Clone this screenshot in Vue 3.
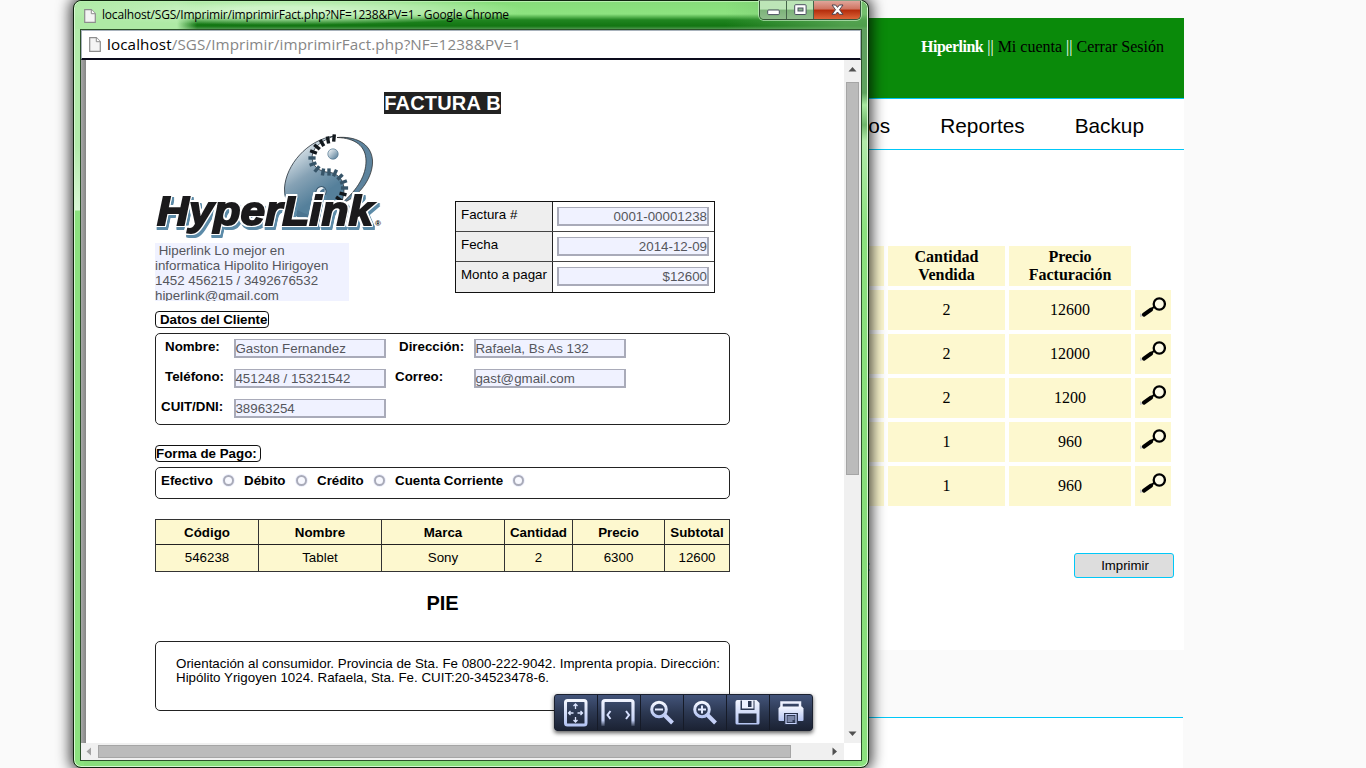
<script setup>
const rows = [
  { qty: '2', price: '12600' },
  { qty: '2', price: '12000' },
  { qty: '2', price: '1200' },
  { qty: '1', price: '960' },
  { qty: '1', price: '960' },
]
const meta = [
  { label: 'Factura #', value: '0001-00001238' },
  { label: 'Fecha', value: '2014-12-09' },
  { label: 'Monto a pagar', value: '$12600' },
]
const heads = ['Código', 'Nombre', 'Marca', 'Cantidad', 'Precio', 'Subtotal']
const item = ['546238', 'Tablet', 'Sony', '2', '6300', '12600']
// Teeth of the gear edge that runs along the S curve of the emblem
const teeth = [
  [179, 6, 95], [173, 8, 80], [167, 11, 60], [162, 15, 40], [158.5, 20, 20], [157, 26, 0], [158, 32, -20],
  [162, 37, -50], [168, 40, -80], [174, 40, -90], [180, 41, -65], [185, 45, -45], [188.500, 50, -20], [189.500, 56, 0],
  [188, 62, 15], [184, 67, 35],
]
</script>

<template>
  <div class="desktop">
    <div class="page">
      <header class="top"><b>Hiperlink</b> <i>||</i> <a>Mi cuenta</a> <i>||</i> <a>Cerrar Sesión</a></header>
      <nav class="menu"><span class="m1">Productos</span><span class="m2">Reportes</span><span class="m3">Backup</span></nav>
      <main class="main">
        <div class="sales">
          <div class="c h"></div>
          <div class="c h">Cantidad<br>Vendida</div>
          <div class="c h">Precio<br>Facturación</div>
          <div></div>
          <template v-for="(r, i) in rows" :key="i">
            <div class="c"></div>
            <div class="c">{{ r.qty }}</div>
            <div class="c">{{ r.price }}</div>
            <div class="c lens">
              <svg width="26" height="22" viewBox="0 0 26 22">
                <path d="M0 16l3 3-3 1z" fill="#c9c9c9" />
                <path d="M4 17.6L11 12.6" stroke="#000" stroke-width="4.2" stroke-linecap="round" />
                <path d="M10 13l4-3" stroke="#000" stroke-width="2" />
                <circle cx="19.3" cy="7" r="5.6" fill="#fdfbe6" stroke="#000" stroke-width="2.3" />
              </svg>
            </div>
          </template>
        </div>
        <div class="actions"><span>:</span><button>Imprimir</button></div>
      </main>
      <footer class="foot"></footer>
    </div>

    <section class="window">
      <div class="titlebar">
        <svg class="file" width="12" height="14" viewBox="0 0 12 14"><path d="M.7.7h6.6l4 4v8.6H.7z" fill="#f4f4f4" stroke="#8d8d8d" stroke-width="1.2" /><path d="M7.3.7v4h4" fill="#fff" stroke="#8d8d8d" /></svg>
        <span class="title">localhost/SGS/Imprimir/imprimirFact.php?NF=1238&amp;PV=1 - Google Chrome</span>
        <div class="controls">
          <span><svg width="13" height="7" viewBox="0 0 13 7"><rect x=".7" y="1" width="11.6" height="4.6" rx="1" fill="#fff" stroke="#4b5060" /></svg></span>
          <span><svg width="13" height="12" viewBox="0 0 13 12"><rect x=".7" y=".7" width="11.4" height="9.8" rx="1" fill="#fff" stroke="#4b5060" /><rect x="4" y="4" width="5" height="3" fill="#8ab58b" stroke="#4b5060" /></svg></span>
          <span class="close"><svg width="13" height="12" viewBox="0 0 13 12"><path d="M1 1h3.6l1.9 2.4L8.4 1H12L8.5 5.7l3.5 4.6H8.4L6.5 8l-1.9 2.3H1l3.5-4.6z" fill="#fff" stroke="#4b4450" /></svg></span>
        </div>
      </div>
      <div class="client">
        <div class="url">
          <svg class="file" width="12" height="15" viewBox="0 0 12 15"><path d="M.7.7h6.6l4 4v9.6H.7z" fill="#f4f4f4" stroke="#8d8d8d" stroke-width="1.2" /><path d="M7.3.7v4h4" fill="#fff" stroke="#8d8d8d" /></svg>
          <span class="addr">localhost<em>/SGS/Imprimir/imprimirFact.php?NF=1238&amp;PV=1</em></span>
        </div>
        <div class="view">
          <div class="shade"></div>
          <div class="doc">
            <h1><span>FACTURA B</span></h1>
            <div class="head">
              <div class="brand">
                <svg class="logo" width="228" height="108" viewBox="0 0 228 108">
                  <defs>
                    <linearGradient id="disc" x1="0.1" y1="0" x2="0.6" y2="1"><stop offset="0.1" stop-color="#eef3f6" /><stop offset="0.5" stop-color="#86a2b5" /><stop offset="0.8" stop-color="#55809b" /></linearGradient>
                    <linearGradient id="ball" x1="0" y1="0" x2="1" y2="1"><stop offset="0" stop-color="#fff" /><stop offset="1" stop-color="#4b7490" /></linearGradient>
                  </defs>
                  <g>
                    <path d="M182 5.500C200 4 216 11 217.500 28C218.500 44 206 62 192 69L187 71C203 57 211 43 211 29C211 14 200 6 182 5.500Z" fill="#5d839d" stroke="#222" stroke-width=".7" />
                    <path d="M179 4C152 8 131 33 129.500 56C129 72 138 82 151 84L178 84C186 76 189 66 189 56C188 46 181 40 171 40C160 38 155 30 158 20C162 11 172 7 179 4Z" fill="url(#disc)" stroke="#27313a" stroke-width=".8" />
                    <path d="M129.500 60C133 74 143 81 160 84L152 89C138 86 130 75 129.500 60Z" fill="#4b7490" />
                    <rect v-for="(t, i) in teeth" :key="i" x="-3.6" y="-1.7" width="7.2" height="3.4" :transform="`translate(${t[0]} ${t[1]}) rotate(${t[2]})`" :fill="i < 5 || i > 13 ? '#12181d' : '#365468'" />
                    <circle cx="178" cy="22" r="5.2" fill="url(#ball)" stroke="#517791" stroke-width=".7" />
                    <ellipse cx="166" cy="60" rx="5" ry="5.600" fill="#eef3f6" stroke="#36546a" stroke-width="1" transform="rotate(25 166 60)" />
                    <path d="M164.500 64.500c-1-4 1-7 5-8.500c1 4-1 8-5 8.500z" fill="#4b7490" />
                  </g>
                  <text x="2" y="92.500" textLength="216" lengthAdjust="spacingAndGlyphs" class="word">HyperLink</text>
                  <text x="220" y="94" class="reg">®</text>
                </svg>
                <p class="about">&nbsp;Hiperlink Lo mejor en<br>informatica Hipolito Hirigoyen<br>1452 456215 / 3492676532<br>hiperlink@gmail.com</p>
              </div>
              <div class="meta">
                <div v-for="m in meta" :key="m.label" class="mrow"><label>{{ m.label }}</label><div><span class="inp r">{{ m.value }}</span></div></div>
              </div>
            </div>
            <div class="tag t1">Datos del Cliente</div>
            <div class="box customer">
              <label class="in">Nombre:</label><span class="inp">Gaston Fernandez</span><label class="in">Dirección:</label><span class="inp">Rafaela, Bs As 132</span>
              <label class="in">Teléfono:</label><span class="inp">451248 / 15321542</span><label>Correo:</label><span class="inp">gast@gmail.com</span>
              <label>CUIT/DNI:</label><span class="inp">38963254</span>
            </div>
            <div class="tag t2">Forma de Pago:</div>
            <div class="box pay">
              <span class="p1">Efectivo<i></i></span><span class="p2">Débito<i></i></span><span class="p3">Crédito<i></i></span><span class="p4">Cuenta Corriente<i></i></span>
            </div>
            <div class="items">
              <b v-for="h in heads" :key="h">{{ h }}</b>
              <span v-for="(v, i) in item" :key="i">{{ v }}</span>
            </div>
            <h2>PIE</h2>
            <div class="box note">Orientación al consumidor. Provincia de Sta. Fe 0800-222-9042. Imprenta propia. Dirección:<br>Hipólito Yrigoyen 1024. Rafaela, Sta. Fe. CUIT:20-34523478-6.</div>
          </div>
          <div class="vbar">
            <svg width="17" height="22" viewBox="0 0 17 22"><path d="M4.500 11.500h8l-4-4.500z" fill="#505050" /></svg>
            <div class="thumb"></div>
            <svg width="17" height="18" viewBox="0 0 17 18"><path d="M4.500 6.500h8l-4 4.500z" fill="#505050" /></svg>
          </div>
        </div>
        <div class="hbar">
          <svg width="17" height="17" viewBox="0 0 17 17"><path d="M10 4.500v8l-4.500-4z" fill="#a3a3a3" /></svg>
          <div class="thumb"></div>
          <svg width="17" height="17" viewBox="0 0 17 17"><path d="M6.500 4.500v8l4.500-4z" fill="#505050" /></svg>
        </div>
      </div>

      <div class="tools">
        <svg width="0" height="0" class="defs"><defs><linearGradient id="ice" x1="0" y1="0" x2="0" y2="1"><stop offset="0" stop-color="#f4f7ff" /><stop offset="1" stop-color="#b4c4f2" /></linearGradient><linearGradient id="fade" gradientUnits="userSpaceOnUse" x1="0" y1="5" x2="0" y2="32"><stop offset="0" stop-color="#f1f4ff" /><stop offset=".75" stop-color="#c5d1f5" /><stop offset="1" stop-color="#c5d1f5" stop-opacity="0" /></linearGradient></defs></svg>
        <span><svg width="42" height="35" viewBox="0 0 42 35"><rect x="10.500" y="5.500" width="20.500" height="24.500" rx="2" fill="none" stroke="url(#ice)" stroke-width="3" /><path d="M20.500 9v5M20.500 27v-5M13.500 18h5M27.500 18h-5M18.500 11l2-2 2 2M18.500 25l2 2 2-2M15.500 16l-2 2 2 2M25.500 16l2 2-2 2" fill="none" stroke="#dce5ff" stroke-width="1.300" /></svg></span>
        <span><svg width="42" height="35" viewBox="0 0 42 35"><path d="M5 31V7.500q0-2 2-2h26q2 0 2 2V31" fill="none" stroke="url(#fade)" stroke-width="3.200" /><path d="M12.500 16l-3 4 3 4M28 16l3 4-3 4" fill="none" stroke="#d7e0ff" stroke-width="2" /></svg></span>
        <span><svg width="42" height="35" viewBox="0 0 42 35"><circle cx="18" cy="14.500" r="7.300" fill="none" stroke="url(#ice)" stroke-width="3" /><path d="M14 14.500h8" stroke="#e4ebff" stroke-width="2" /><path d="M23.500 20l8 8" stroke="#c5d1f8" stroke-width="4" /></svg></span>
        <span><svg width="42" height="35" viewBox="0 0 42 35"><circle cx="18" cy="14.500" r="7.300" fill="none" stroke="url(#ice)" stroke-width="3" /><path d="M14 14.500h8M18 10.500v8" stroke="#e4ebff" stroke-width="2" /><path d="M23.500 20l8 8" stroke="#c5d1f8" stroke-width="4" /></svg></span>
        <span><svg width="42" height="35" viewBox="-.5 0 42 35"><path d="M10 5h19l3 3v20q0 1.500-1.500 1.500h-21Q8 29.500 8 28V7q0-2 2-2z" fill="url(#ice)" /><path d="M13 5.500h14V15H13z" fill="#2c3852" /><path d="M14.500 5H26v8.500H14.500z" fill="#edf1ff" /><path d="M20.500 6h3.500v6h-3.500z" fill="#2c3852" /><path d="M11 18.500h18V28H11z" fill="#232c40" /></svg></span>
        <span><svg width="42" height="35" viewBox=".5 0 42 35"><path d="M12 12V7.500h18.500V12" fill="none" stroke="#edf1ff" stroke-width="2.500" /><path d="M10.500 11.500h22l1.500 2V25q0 1-1 1H10q-1 0-1-1V13.500z" fill="url(#ice)" /><path d="M14.500 18h14v12h-14z" fill="#28324a" /><path d="M16.500 19.500h10v9h-10z" fill="#2f3a55" stroke="#c7d3fb" stroke-width="1.200" /><path d="M18 22h7M18 24h7M18 26h5" stroke="#c7d3fb" /></svg></span>
      </div>
    </section>
  </div>
</template>

<style>
html, body { margin: 0; background: #fafafa; overflow: hidden; }
</style>

<style scoped>
* { box-sizing: border-box; }
.desktop { position: relative; width: 1366px; height: 768px; overflow: hidden; background: #fafafa; }
.page { width: 1002px; margin-left: 182px; padding-top: 18px; font-family: "Liberation Serif", serif; font-size: 16px; color: #000; }
.top { height: 80px; background: #0a8a0a; text-align: right; padding: 20px 20px 0 0; line-height: 18px; }
.top b, .top i { color: #fff; font-style: normal; }
.top b { letter-spacing: -.5px; }
.menu { height: 52px; background: #fff; border-top: 1px solid #00c8f8; border-bottom: 1px solid #00c8f8; font: 20.8px/53px "Liberation Sans", sans-serif; display: flex; justify-content: flex-end; padding-right: 40px; }
.m1, .m2 { margin-right: 50px; }
.main { height: 500px; background: #fff; padding-top: 96px; }
.sales { display: grid; grid-template-columns: 120px 117px 122px 36px; gap: 4px; justify-content: end; padding-right: 13px; grid-auto-rows: 40px; }
.c { background: #fdf8cf; text-align: center; line-height: 40px; }
.h { font-weight: bold; line-height: 18px; padding-top: 2px; }
.lens svg { display: block; margin: 7px 0 0 5px; fill: none; }
.actions { display: flex; justify-content: flex-end; margin: 47px 10px 0 0; }
.actions span { width: 208px; line-height: 26px; }
.actions button { width: 100px; height: 25px; border: 1px solid #00c8f8; border-radius: 3px; background: #ddd; font: 13.2px "Liberation Sans", sans-serif; padding: 0 0 0 2px; color: #000; }
.foot { margin-top: 67px; height: 60px; width: 1001px; background: #fff; border-top: 1px solid #00c8f8; }

.window { position: absolute; left: 73px; top: 0; width: 796px; height: 768px; border: 1px solid #10240f; border-radius: 8px; padding: 0 6px 7px 6px; box-shadow: inset 0 0 0 1px #d8f8d2, 0 0 14px 3px rgba(0, 0, 0, .75); background: linear-gradient(#b2ebaa 0, #b2ebaa 145px, #d9f6d5 209px, #8be17e 210px, #8be17e) 0 0 / 10px 100% no-repeat, linear-gradient(#5f9d5f 0, #5fa35f 92px, #a8e8a0 104px, #6fb66b 124px, #b2ebaa 140px, #8be17e 230px, #86dc79 560px, #8be17e) 100% 0 / 10px 100% no-repeat, #88dd7b; }
.titlebar { height: 28px; margin: 0 -5px; padding-left: 9px; display: flex; border-radius: 7px 7px 0 0; background: linear-gradient(#b9f0b0, #b9f0b0) 0 0 / 100% 1px no-repeat, radial-gradient(ellipse 245px 15px at 205px 9px, rgba(214, 247, 208, .9) 20%, rgba(190, 238, 182, .75) 60%, transparent), linear-gradient(90deg, #aeeaa5 102px, transparent 122px, transparent 650px, rgba(105, 175, 100, .7) 770px), linear-gradient(#86dc79 0, #8de380 13px, #208520 19px, #127512 25px, #4e984e 28px); }
.titlebar .file { margin-top: 8px; }
.title { font: 12px/28px "Open Sans", sans-serif; letter-spacing: -.19px; margin-left: 6px; width: 657px; white-space: nowrap; color: #000; }
.controls { display: flex; height: 19px; border: 1px solid #38543a; border-top: 0; border-radius: 0 0 5px 5px; overflow: hidden; box-shadow: 0 0 0 1px rgba(210, 245, 210, .6); }
.controls span { width: 27px; display: flex; align-items: center; justify-content: center; background: linear-gradient(#bce5b7 45%, #7db37a 50%, #8fbd8c); border-right: 1px solid #45644a; }
.controls span:first-child svg { margin-top: 5px; }
.controls .close { width: 46px; border: 0; background: linear-gradient(#e0a59a 0, #cf7360 45%, #b32b0b 50%, #dd6538); }
.client { height: 732px; border: 1px solid #2c512a; background: #fff; display: flex; flex-direction: column; }
.url { flex: none; height: 30px; border: 1px solid #a9b3bd; border-bottom: 2px solid #0c0c1c; display: flex; align-items: center; padding-left: 7px; }
.addr { font: 15.2px/27px "Open Sans", sans-serif; letter-spacing: .12px; margin-left: 6px; color: #000; white-space: nowrap; }
.addr em { font-style: normal; color: #868686; }
.view { flex: 1; display: flex; min-height: 0; overflow: hidden; }
.shade { width: 5px; background: linear-gradient(90deg, #a8a8a8, #858585); }
.doc { width: 758px; flex: none; padding: 32px 0 0 69px; font: 13.33px "Liberation Sans", sans-serif; color: #000; }
h1 { margin: 0; width: 575px; text-align: center; font-size: 20px; line-height: 22px; height: 22px; }
h1 span { display: inline-block; background: #222; color: #fff; letter-spacing: .2px; }
.head { display: flex; justify-content: space-between; width: 560px; height: 197px; padding-top: 18px; }
.brand { width: 228px; }
.logo { display: block; height: 108px; margin-bottom: 3px; }
.word { font: italic 700 41px "Liberation Sans", sans-serif; fill: #1b1a1c; stroke: #1b1a1c; stroke-width: 1.8px; filter: drop-shadow(1.3px 0 0 #fff) drop-shadow(-1.3px 0 0 #fff) drop-shadow(0 1.3px 0 #fff) drop-shadow(0 -1.3px 0 #fff) drop-shadow(2px 3px 0 #5c8ba8); }
.reg { font: bold 8px "Liberation Sans", sans-serif; }
.about { margin: 0; width: 194px; height: 58px; overflow: hidden; background: #f0f2ff; color: #55565c; line-height: 15px; font-size: 13.33px; white-space: nowrap; }
.meta { margin-top: 69px; width: 260px; height: 92px; border: 1px solid #111; }
.mrow { display: flex; height: 30px; border-bottom: 1px solid #444; }
.mrow:last-child { border-bottom: 0; }
.mrow label { width: 97px; background: #eee; border-right: 1px solid #222; padding-left: 5px; line-height: 25px; white-space: nowrap; }
.mrow div { padding: 5px 0 0 4px; }
.inp { display: block; width: 152px; height: 19px; border: 2px solid #a9abb9; background: #f0f2ff; color: #55565c; line-height: 17px; white-space: nowrap; border-top-width: 1px; }
.inp.r { text-align: right; }
.tag { font-weight: bold; border: 1px solid #111; border-radius: 4px; height: 17px; line-height: 16px; white-space: nowrap; }
.t1 { width: 114px; padding-left: 4px; letter-spacing: -.05px; }
.box { width: 575px; border: 1px solid #222; border-radius: 5px; }
.customer { margin-top: 5px; height: 92px; display: grid; grid-template-columns: 73px 161px 79px 152px; grid-auto-rows: 30px; padding: 5px 0 0 5px; font-weight: bold; }
.customer .inp { font-weight: normal; text-indent: -.6px; }
.customer label { line-height: 16px; }
.customer .in { padding-left: 4px; }
.t2 { width: 106px; margin-top: 20px; }
.pay { margin-top: 5px; height: 32px; padding-left: 5px; display: flex; font-weight: bold; line-height: 26px; }
.pay span { display: flex; justify-content: space-between; padding-right: 10px; }
.pay i { width: 11px; height: 11px; margin-top: 7px; border: 2.5px solid #a9abb9; border-radius: 50%; background: #f8f9ff; box-shadow: 0 0 0 1px #eef0fc; }
.p1 { width: 83px; } .p2 { width: 73px; } .p3 { width: 78px; } .p4 { width: 139px; }
.items { margin-top: 20px; width: 575px; height: 53px; display: grid; grid-template-columns: 103px 123px 123px 68px 92px 65px; grid-template-rows: 25px 26px; border: 1px solid #333; border-right: 0; background: #fdf8cf; text-align: center; line-height: 26px; overflow: hidden; }
.items > * { border-right: 1px solid #333; }
.items b { border-bottom: 1px solid #222; }
h2 { margin: 20px 0 0; width: 575px; text-align: center; font-size: 20px; line-height: 23px; }
.note { margin-top: 26px; height: 70px; padding: 15px 0 0 20px; line-height: 14px; white-space: nowrap; letter-spacing: .01px; }
.vbar { width: 17px; flex: none; background: #f0f0f0; display: flex; flex-direction: column; }
.vbar .thumb { width: 13px; height: 393px; margin: 0 0 250px 2px; background: #bbb; border: 1px solid #a5a5a5; flex: none; }
.vbar svg, .hbar svg { flex: none; display: block; }
.hbar { flex: none; height: 17px; width: 763px; background: #f0f0f0; display: flex; }
.hbar .thumb { width: 693px; height: 13px; margin: 2px 35px 0 0; background: #bbb; border: 1px solid #a5a5a5; flex: none; }
.tools { position: absolute; left: 480px; top: 693px; width: 259px; height: 37px; display: flex; border: 1px solid #1b2130; border-radius: 3px; background: linear-gradient(#43547a, #2c3852 50%, #1b2233); box-shadow: 0 2px 4px rgba(0, 0, 0, .65); }
.tools span { width: 43px; flex: none; border-left: 1px solid #161b28; }
.tools span:first-of-type { border: 0; width: 42px; }
.tools span svg { display: block; }
.defs { position: absolute; }
</style>
